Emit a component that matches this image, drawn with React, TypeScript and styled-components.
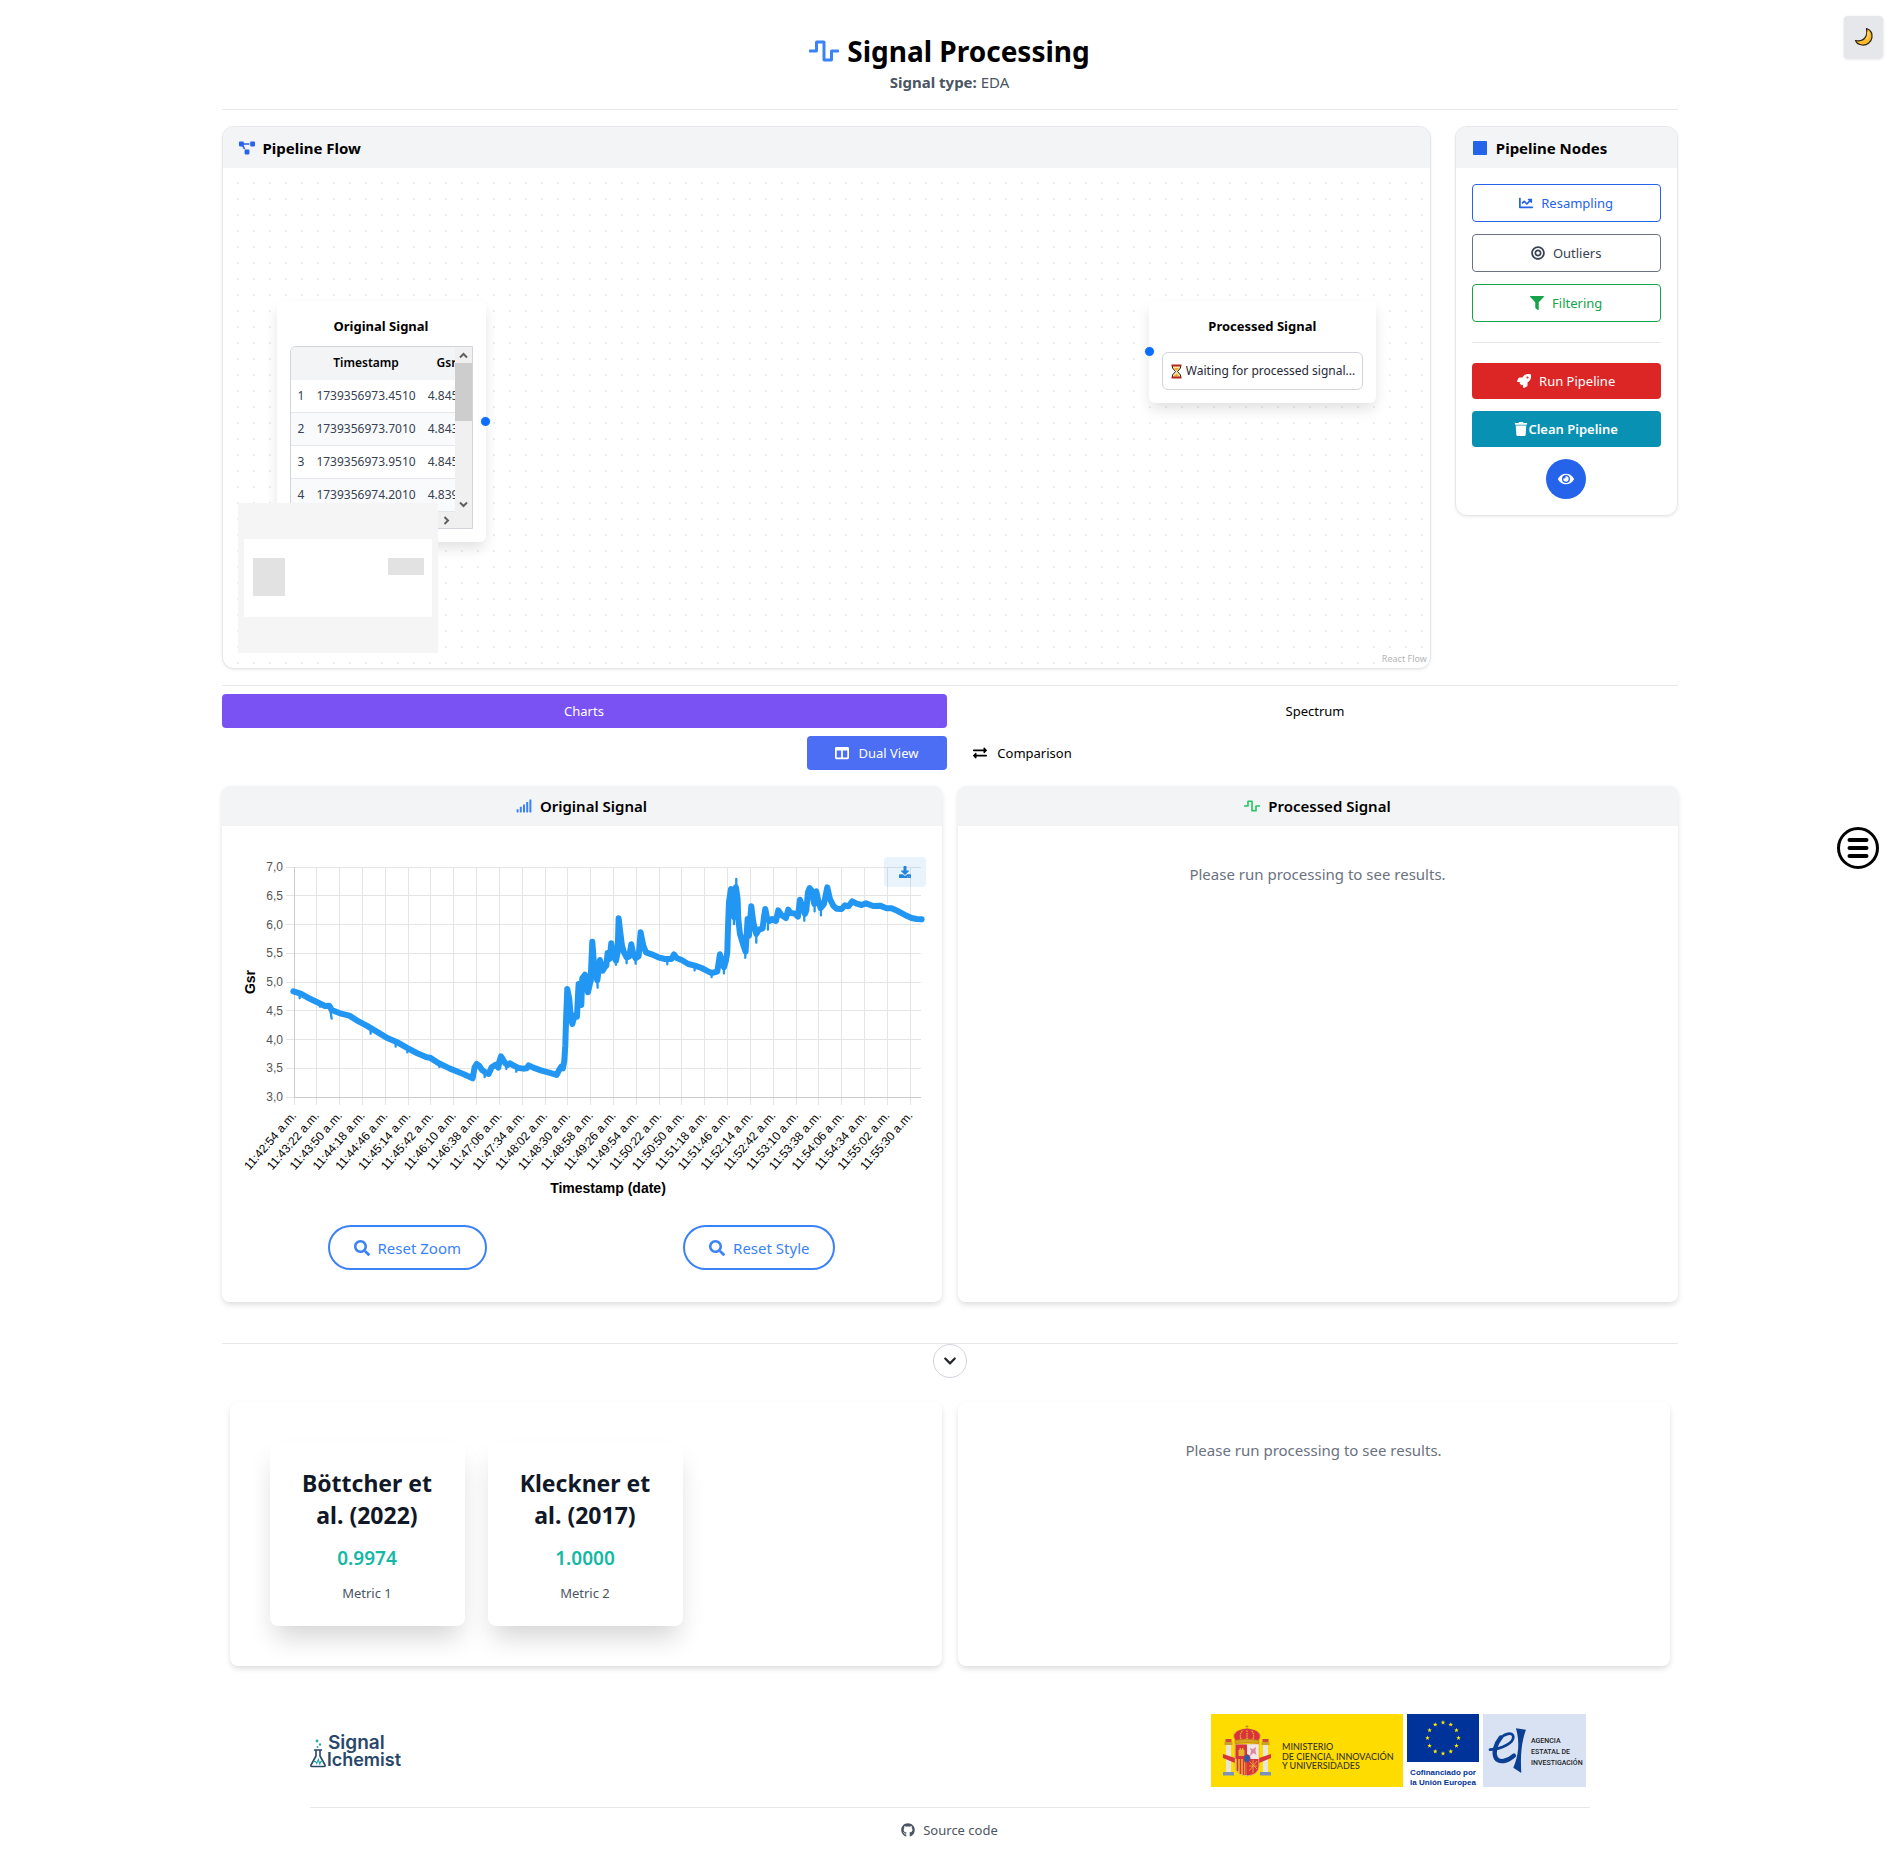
import React from "react";
import styled, { createGlobalStyle, css } from "styled-components";
import {
  FaBullseye,
  FaChartLine,
  FaChevronDown,
  FaColumns,
  FaDownload,
  FaExchangeAlt,
  FaEye,
  FaFilter,
  FaGithub,
  FaProjectDiagram,
  FaRocket,
  FaSearch,
  FaSignal,
  FaTrash,
  FaWaveSquare,
} from "react-icons/fa";

const GlobalStyle = createGlobalStyle`
  *, *::before, *::after { box-sizing: border-box; }
  body {
    margin: 0;
    background: #fff;
    color: #000;
    font-family: "Noto Sans", "Open Sans", sans-serif;
    font-size: 15px;
    line-height: 24px;
  }
  h1, h2, h3, p { margin: 0; font-size: inherit; }
  button { font: inherit; color: inherit; cursor: pointer; }
  svg { display: block; flex-shrink: 0; }
`;

const Page = styled.main`
  max-width: 1536px;
  margin: 0 auto;
  padding: 32px 40px 0;
`;

const PageHeader = styled.header`
  text-align: center;
  padding-bottom: 15px;
  border-bottom: 1px solid #e5e7eb;
`;

const PageTitle = styled.h1`
  display: flex;
  align-items: center;
  justify-content: center;
  gap: 8px;
  font-size: 28px;
  line-height: 38px;
  font-weight: 700;
  svg { color: #3b82f6; }
`;

const Subtitle = styled.p`
  color: #4b5563;
`;

const Workspace = styled.section`
  display: grid;
  grid-template-columns: repeat(12, minmax(0, 1fr));
  gap: 24px;
  align-items: start;
  padding: 16px 0;
`;

const Card = styled.section<{ $span: number }>`
  grid-column: span ${(p) => p.$span};
  border: 1px solid #e5e7eb;
  border-radius: 12px;
  overflow: hidden;
  background: #fff;
  box-shadow: 0 1px 3px rgba(0, 0, 0, 0.08);
`;

const CardHeader = styled.h2`
  display: flex;
  align-items: center;
  gap: 8px;
  padding: 9px 16px 8px;
  background: #f3f4f6;
  font-weight: 700;
  svg { color: #2563eb; }
`;

const Canvas = styled.div`
  position: relative;
  height: 500px;
  background-image: radial-gradient(circle at 50% 50%, #e8e8ec 0, #f0f0f2 1px, transparent 1px);
  background-size: 16px 16px;
  background-position: 7px 7px;
`;

const FlowNode = styled.article<{ $wide?: boolean }>`
  position: absolute;
  top: 133px;
  ${(p) => (p.$wide ? "right: 54px; width: 227px;" : "left: 54px; width: 209px;")}
  padding: 13px;
  border-radius: 6px;
  background: #fff;
  box-shadow: 0 7px 14px -1px rgba(0, 0, 0, 0.12);
`;

const NodeTitle = styled.h3`
  text-align: center;
  font-size: 13px;
  font-weight: 700;
  line-height: 24px;
`;

const Handle = styled.span<{ $side: "left" | "right" }>`
  position: absolute;
  ${(p) => p.$side}: -5px;
  top: ${(p) => (p.$side === "right" ? "115px" : "45px")};
  width: 11px;
  height: 11px;
  border-radius: 50%;
  border: 1px solid #fff;
  background: #0d6efd;
`;

const Waiting = styled.p`
  display: flex;
  align-items: center;
  gap: 4px;
  margin-top: 14px;
  padding: 7px 8px;
  border: 1px solid #d1d5db;
  border-radius: 6px;
  font-size: 12px;
  line-height: 22px;
  white-space: nowrap;
  color: #1f2937;
`;

const TableFrame = styled.div`
  display: grid;
  grid-template-columns: minmax(0, 1fr) 17px;
  grid-template-rows: 165px 16px;
  margin-top: 8px;
  border: 1px solid #d1d5db;
  border-radius: 6px 0 0 0;
  overflow: hidden;
`;

const TableClip = styled.div`
  overflow: hidden;
`;

const SampleTable = styled.table`
  border-collapse: separate;
  border-spacing: 0;
  font-size: 12px;
  line-height: 20px;
  color: #374151;
  th {
    padding: 6px 6px 7px;
    font-weight: 600;
    background: #f3f4f6;
    color: #000;
  }
  td {
    padding: 6px;
    border-bottom: 1px solid #e5e7eb;
  }
  td:first-child { padding-left: 7px; }
  tbody tr:nth-child(even) { background: #f9fafb; }
`;

const VerticalBar = styled.div`
  display: flex;
  flex-direction: column;
  align-items: center;
  justify-content: space-between;
  background: #f0f0f0;
  color: #606060;
`;

const Thumb = styled.div`
  width: 100%;
  height: 58px;
  margin-bottom: auto;
  background: #cdcdcd;
`;

const ArrowBox = styled.span`
  display: flex;
  align-items: center;
  justify-content: center;
  width: 17px;
  height: 16px;
`;

const HorizontalBar = styled.div`
  display: flex;
  justify-content: flex-end;
  background: #f0f0f0;
  color: #606060;
`;

const Corner = styled.div`
  background: #f0f0f0;
`;

const MiniMap = styled.div`
  position: absolute;
  left: 15px;
  bottom: 15px;
  width: 200px;
  height: 150px;
  background: #f5f5f5;
`;

const Attribution = styled.a`
  position: absolute;
  right: 3px;
  bottom: 2px;
  padding-left: 2px;
  background: #fff;
  font-size: 9px;
  line-height: 14px;
  color: #b5b5b5;
  text-decoration: none;
`;

const NodePanel = styled.div`
  display: flex;
  flex-direction: column;
  gap: 12px;
  padding: 16px;
`;

const NodeButton = styled.button<{ $color: string; $line?: string }>`
  display: flex;
  align-items: center;
  justify-content: center;
  gap: 8px;
  height: 38px;
  border: 1px solid ${(p) => p.$line ?? p.$color};
  border-radius: 4px;
  background: #fff;
  color: ${(p) => p.$color};
  font-size: 13px;
`;

const ActionButton = styled.button<{ $color: string; $tight?: boolean }>`
  display: flex;
  align-items: center;
  justify-content: center;
  gap: ${(p) => (p.$tight ? 0 : 8)}px;
  height: 36px;
  border: 0;
  border-radius: 4px;
  background: ${(p) => p.$color};
  color: #fff;
  font-size: 13px;
  font-weight: ${(p) => (p.$tight ? 600 : 400)};
`;

const Divider = styled.hr`
  width: 100%;
  margin: 8px 0;
  border: 0;
  border-top: 1px solid #e5e7eb;
`;

const EyeButton = styled.button`
  display: flex;
  align-items: center;
  justify-content: center;
  align-self: center;
  width: 40px;
  height: 40px;
  border: 0;
  border-radius: 50%;
  background: #2563eb;
  color: #fff;
`;

const Tabs = styled.div`
  display: grid;
  grid-template-columns: 1fr 1fr;
  gap: 6px;
  padding-top: 8px;
  border-top: 1px solid #e5e7eb;
`;

const SubTabs = styled.div`
  display: grid;
  grid-template-columns: 140px 140px;
  justify-content: center;
  gap: 6px;
  padding: 8px 0 16px;
`;

const Tab = styled.button<{ $fill?: string }>`
  display: flex;
  align-items: center;
  justify-content: center;
  gap: 10px;
  height: 34px;
  padding: 0;
  border: 0;
  border-radius: 4px;
  background: ${(p) => p.$fill ?? "transparent"};
  color: ${(p) => (p.$fill ? "#fff" : "#000")};
  font-size: 13px;
`;

const TwoColumns = styled.section<{ $inset?: boolean }>`
  display: grid;
  grid-template-columns: minmax(0, 1fr) minmax(0, 1fr);
  gap: 16px;
  ${(p) => p.$inset && css`padding: 0 8px;`}
`;

const Panel = styled.section<{ $pad?: boolean }>`
  border-radius: 8px;
  overflow: hidden;
  background: #fff;
  box-shadow: 0 3px 6px -1px rgba(0, 0, 0, 0.16);
  ${(p) => p.$pad && css`padding: 40px;`}
`;

const PanelHeader = styled.h2<{ $icon: string }>`
  display: flex;
  align-items: center;
  justify-content: center;
  gap: 8px;
  height: 40px;
  background: #f3f4f6;
  font-weight: 600;
  svg { color: ${(p) => p.$icon}; }
`;

const Notice = styled.p`
  padding-top: 36px;
  text-align: center;
  color: #6b7280;
`;

const ChartBox = styled.div`
  position: relative;
  padding: 15px 16px 0;
`;

const ChartSvg = styled.svg`
  width: 100%;
  height: auto;
  font-family: "Liberation Sans", Arial, sans-serif;
`;

const DownloadButton = styled.button`
  position: absolute;
  top: 31px;
  right: 16px;
  display: flex;
  align-items: center;
  justify-content: center;
  width: 42px;
  height: 30px;
  border: 0;
  border-radius: 4px;
  background: rgba(33, 133, 220, 0.1);
  color: #2185dc;
`;

const ResetRow = styled.div`
  display: flex;
  justify-content: space-around;
  padding: 21px 8px 32px;
`;

const PillButton = styled.button`
  display: flex;
  align-items: center;
  gap: 8px;
  height: 45px;
  padding: 0 24px;
  border: 2px solid #3b82f6;
  border-radius: 23px;
  background: #fff;
  color: #3b82f6;
`;

const Fold = styled.div`
  display: flex;
  justify-content: center;
  margin-top: 41px;
  padding-bottom: 24px;
  border-top: 1px solid #e5e7eb;
`;

const FoldButton = styled.button`
  display: flex;
  align-items: center;
  justify-content: center;
  width: 34px;
  height: 34px;
  padding: 0;
  border: 1px solid #d1d5db;
  border-radius: 50%;
  background: #fff;
  color: #212529;
`;

const Metrics = styled.div`
  display: grid;
  grid-template-columns: 195px 195px;
  gap: 23px;
`;

const MetricCard = styled.article`
  padding: 25px 24px 23px;
  border-radius: 8px;
  text-align: center;
  background: #fff;
  box-shadow: 0 16px 26px -5px rgba(0, 0, 0, 0.17);
`;

const MetricName = styled.h3`
  font-size: 23px;
  line-height: 32px;
  font-weight: 700;
  color: #111827;
`;

const MetricValue = styled.p`
  margin-top: 13px;
  font-size: 19px;
  line-height: 28px;
  font-weight: 600;
  color: #14b8a6;
`;

const MetricLabel = styled.p`
  margin-top: 11px;
  font-size: 13px;
  line-height: 20px;
  color: #4b5563;
`;

const Footer = styled.footer`
  max-width: 1280px;
  margin: 0 auto;
  padding-top: 48px;
`;

const Logos = styled.div`
  display: flex;
  align-items: center;
  justify-content: space-between;
  padding-bottom: 19px;
  padding-right: 3px;
  border-bottom: 1px solid #e5e7eb;
`;

const SourceLink = styled.a`
  display: flex;
  align-items: center;
  justify-content: center;
  gap: 8px;
  padding: 10px 0 14px;
  font-size: 13px;
  color: #4b5563;
  text-decoration: none;
`;

const ThemeButton = styled.button`
  position: fixed;
  top: 16px;
  right: 16px;
  display: flex;
  align-items: center;
  justify-content: center;
  width: 39px;
  height: 42px;
  padding: 0;
  border: 0;
  border-radius: 4px;
  background: #e5e7eb;
  box-shadow: 0 1px 3px rgba(0, 0, 0, 0.15);
`;

const MenuButton = styled.button`
  position: fixed;
  top: 827px;
  right: 20px;
  width: 42px;
  height: 42px;
  padding: 0;
  border: 0;
  background: transparent;
`;

const samples = [
  ["1739356973.4510", "4.8455"],
  ["1739356973.7010", "4.8439"],
  ["1739356973.9510", "4.8455"],
  ["1739356974.2010", "4.8393"],
];

const yTicks = ["7,0", "6,5", "6,0", "5,5", "5,0", "4,5", "4,0", "3,5", "3,0"];

const PLOT = { left: 56, right: 683, top: 26, step: 28.75, bottom: 256, tick: 22.82 };

/* One label every 28 seconds, starting at 11:42:54. */
const xTicks = Array.from({ length: 28 }, (_, i) => {
  const t = 42 * 60 + 54 + i * 28;
  const two = (n: number) => String(n).padStart(2, "0");
  return `11:${two(Math.floor(t / 60))}:${two(t % 60)} a.m.`;
});

/* Signal trace in thirds of a chart unit. */
const TRACE_A =
  "190,457 212,464 235,477 262,490 285,501 298,500 305,513 330,523 358,530 380,544 410,560 440,578 470,596 500,609 530,626 560,642 590,655 600,656 625,672 660,689 700,705 728,718 734,685 740,675 748,681 757,694 766,700 776,705 785,685 798,677 805,686 809,665 813,652 818,660 826,673 833,678 840,673 850,679 865,687 880,689 890,688 896,679 910,686 935,695 960,702 980,708 988,692 994,683 999,688 1003,665 1006,620 1008,550 1012,450 1018,480 1022,530 1027,555 1034,530 1041,533 1044,470 1046,435 1051,440 1054,498 1057,418 1065,407 1070,430 1074,460 1082,425";
const TRACE_B =
  "92,425 97,308 101,360 104,400 112,424 120,363 128,395 134,385 139,380 143,342 149,360 154,313 160,350 168,365 173,340 176,238 181,280 186,320 192,340 200,355 208,352 214,316 220,345 227,358 236,352 242,280 250,320 258,340 275,346 295,355 315,360 335,360 342,346 350,357 365,363 385,375 405,380 425,387 440,395 455,402 472,398 480,346 486,372 492,385 498,365 502,340 504,270 507,190 513,150 518,180 523,235 528,145 533,180 535,240 540,285 550,318 557,338 560,290 563,240 567,290 574,202 580,250 589,285 597,272 608,268 612,235 616,210 622,240 628,246 636,240 648,246 655,214 664,228 678,237 685,212 692,222 705,224 714,233 720,182 728,205 735,225 739,215 744,160 749,147 755,155 763,195 769,157 775,185 782,207 792,195 802,145 810,180 820,200 830,209 845,210 855,199 866,202 877,187 890,194 905,198 918,193 940,201 960,200 980,208 995,208 1015,217 1035,228 1055,237 1070,240 1085,241";

/* Thin downward and upward spikes that stick out of the thick trace. */
const SPIKES =
  "M209 464v14M270 490v13M300 505l5 34M422 570v14M497 609v14M532 626v14M628 672v12M764 700v14M829 675v15M859 685v13M1102 420l1 26M1190 355v18M1217 358v16M1312 362v14M1394 380v14M1445 400v14M1482 385v18M1519 150l0 -30M1546 338v18M1579 285v26M1614 240v32M1723 225v20M1754 195v22M1773 207v22M1512 235v20M1158 365v12";

function SignalChart() {
  return (
    <ChartSvg viewBox="0 0 688 363" role="img" aria-label="Gsr over time">
      <g stroke="#e5e5e5" strokeWidth="1" shapeRendering="crispEdges">
        {yTicks.map((t, i) => (
          <line key={t} x1={PLOT.left - 8} x2={PLOT.right} y1={PLOT.top + i * PLOT.step} y2={PLOT.top + i * PLOT.step} />
        ))}
        {xTicks.map((t, i) => (
          <line key={t} x1={PLOT.left + i * PLOT.tick} x2={PLOT.left + i * PLOT.tick} y1={PLOT.top} y2={PLOT.bottom + 8} />
        ))}
        <path d={`M${PLOT.left} ${PLOT.top}V${PLOT.bottom}H${PLOT.right}`} fill="none" stroke="#cccccc" />
      </g>
      <g fontSize="12" fill="#555" textAnchor="end">
        {yTicks.map((t, i) => (
          <text key={t} x={PLOT.left - 11} y={PLOT.top + 4 + i * PLOT.step}>{t}</text>
        ))}
      </g>
      <g fontSize="12" fill="#000" textAnchor="end">
        {xTicks.map((t, i) => {
          const x = PLOT.left + i * PLOT.tick + 3;
          return <text key={t} x={x} y={275} transform={`rotate(-49 ${x} 275)`}>{t}</text>;
        })}
      </g>
      <g fontWeight="700" fill="#000" textAnchor="middle">
        <text x={370} y={352} fontSize="14">Timestamp (date)</text>
        <text x={17} y={141} fontSize="14" transform="rotate(-90 17 141)">Gsr</text>
      </g>
      <g transform="translate(-8 -2) scale(0.3333)" fill="none" stroke="#2196f3" strokeLinejoin="round" strokeLinecap="round">
        <polyline points={TRACE_A} strokeWidth="18" />
        <polyline points={TRACE_B} strokeWidth="18" transform="translate(990 0)" />
        <path d={SPIKES} strokeWidth="7" />
      </g>
    </ChartSvg>
  );
}

function Arrow({ d }: { d: string }) {
  return (
    <ArrowBox>
      <svg width="9" height="9" viewBox="0 0 9 9" fill="none" stroke="currentColor" strokeWidth="2" aria-hidden="true">
        <path d={d} />
      </svg>
    </ArrowBox>
  );
}

function Hourglass() {
  return (
    <svg width="11" height="15" viewBox="0 0 11 15" aria-hidden="true">
      <path d="M1.5 1.5h8v2.500L6.500 7.500l3 3.500v2.500h-8V11l3-3.500-3-3.500z" fill="#ffe8a6" stroke="#222" />
      <path d="M3 4h5L5.500 7zM2.500 12.500l3-3 3 3z" fill="#f7a824" />
      <path d="M.5 1.500h10M.5 13.500h10" stroke="#b3261e" strokeWidth="2" />
    </svg>
  );
}

function Moon() {
  return (
    <svg width="20" height="20" viewBox="0 0 20 20" aria-hidden="true">
      <path d="M12.500 1.500c4 1.500 6 5 5.500 8.800-.8 5-5.200 8.200-9.800 7.700C5 17.700 2.500 16 1.500 13.500c5 1 8.800-.8 10.500-4.500 1.200-2.700 1-5.200.500-7.500z" fill="#fdb92c" stroke="#2b2113" strokeWidth="1.200" strokeLinejoin="round" />
      <path d="M14 4.500c.6 2.500.2 5.500-1.500 8" fill="none" stroke="#ffd768" strokeWidth="1.500" />
    </svg>
  );
}

function AlchemistLogo() {
  return (
    <svg width="96" height="38" viewBox="0 0 96 38" role="img" aria-label="Signal Alchemist">
      <g fill="#28476a" fontFamily="Inter, sans-serif" fontWeight="600">
        <text x="18" y="17" fontSize="19">Signal</text>
        <text x="17" y="34" fontSize="18">lchemist</text>
      </g>
      <g fill="none" stroke="#28476a" strokeWidth="1.600" strokeLinejoin="round" strokeLinecap="round">
        <path d="M4.500 18h7M6 18.500v5.500L1 33q-.6 1.500 1 1.500h12q1.600 0 1-1.500l-5-9v-5.500" />
      </g>
      <path d="M3.500 29.500h2l1.200 2 1.600-4 1.500 4.500 1-2.500h2" fill="none" stroke="#2aa9a9" strokeWidth="1.200" />
      <g fill="#2aa9a9">
        <circle cx="7" cy="9" r="1.400" />
        <circle cx="10" cy="12.500" r="1.200" />
        <circle cx="7.500" cy="15" r="0.900" />
      </g>
    </svg>
  );
}

const stars = Array.from({ length: 12 }, (_, i) => {
  const a = (i * Math.PI) / 6;
  return { x: 232 + 15.500 * Math.sin(a), y: 24 - 15.500 * Math.cos(a) };
});

function FundingLogos() {
  return (
    <svg width="376" height="74" viewBox="0 0 376 74" role="img" aria-label="Ministerio de Ciencia, Innovación y Universidades, Unión Europea, Agencia Estatal de Investigación">
      <rect width="192" height="73" fill="#ffdc00" />
      <g>
        <path d="M15 31h5v27h-5zM52 31h5v27h-5z" fill="#e9e5da" />
        <path d="M13.500 28h8v3h-8zM50.500 28h8v3h-8z" fill="#c9a227" />
        <path d="M14.500 25h6v3h-6zM51.500 25h6v3h-6z" fill="#d2473b" />
        <path d="M12 58h11v3.500H12zM49 58h11v3.500H49z" fill="#7c93b8" />
        <path d="M12 40l12 4v5l-12-5zM60 40l-12 4v5l12-5z" fill="#d9343c" />
        <path d="M24 30h24v22q0 9-12 10-12-1-12-10z" fill="#e8e0d2" stroke="#c9a227" strokeWidth=".6" />
        <path d="M24.500 30.500H36V45H24.500z" fill="#d9343c" />
        <path d="M27.500 42v-6h1v-2h1.500v1.500h1V34h1.500v2h1v6z" fill="#e5b52b" />
        <path d="M36 30.500h11.500V45H36z" fill="#f4e6e6" />
        <path d="M39 42l1-5-1-3 3 1 3-2-.5 4 1 4-3-2z" fill="#d98aa0" />
        <path d="M24.500 45H36v16.500q-11.500-1-11.500-9.500z" fill="#e9b92d" />
        <path d="M26.500 45v12M29.500 45v15M32.500 45v16M35 45v16" stroke="#d9343c" strokeWidth="1.500" />
        <path d="M36 45h11.500v7q0 8.500-11.500 9.500z" fill="#d9343c" />
        <path d="M38 47l8 8M46 47l-8 10M38 52h8M42 46v13" stroke="#e9b92d" strokeWidth=".8" />
        <ellipse cx="36" cy="44.500" rx="3.200" ry="4" fill="#2b5ca8" stroke="#d9343c" strokeWidth=".7" />
        <path d="M25 28q-3-4-2-8 4-5 13-5.500Q45 15 49 20q1 4-2 8z" fill="#d9343c" />
        <path d="M24 29.500v-3q12-3 24 0v3q-12-2-24 0zM36 11v4M34.500 12.500h3" fill="#d9a520" stroke="#b9871a" strokeWidth=".8" />
        <path d="M24 26q-3-5 1-8M30 25q-2-5 2-9M36 25v-9M42 25q2-5-2-9M48 26q3-5-1-8" fill="none" stroke="#e5b52b" strokeWidth="1.300" strokeDasharray="1.500 .8" />
      </g>
      <g fontFamily="Lato, sans-serif" fontSize="9" fontWeight="500" fill="#3a3520">
        <text x="71" y="36">MINISTERIO</text>
        <text x="71" y="46">DE CIENCIA, INNOVACIÓN</text>
        <text x="71" y="55">Y UNIVERSIDADES</text>
      </g>
      <rect x="196" width="72" height="48" fill="#003399" />
      {stars.map((s, i) => (
        <path
          key={i}
          transform={`translate(${s.x} ${s.y})`}
          d="M0-2.400.6-.8 2.300-.7 1 .3 1.400 2 0 1-1.400 2-1 .3-2.300-.7-.6-.8z"
          fill="#ffe600"
        />
      ))}
      <g fontFamily="Liberation Sans, Arial, sans-serif" fontSize="8" fontWeight="700" fill="#003399" textAnchor="middle">
        <text x="232" y="61">Cofinanciado por</text>
        <text x="232" y="71">la Unión Europea</text>
      </g>
      <rect x="272" width="103" height="73" fill="#d9e2f3" />
      <g transform="translate(-11 -15) scale(0.3333)" fill="none" stroke="#0a3f94" strokeLinecap="round">
        <path d="M870 152C905 150 942 132 940 113C938 97 912 104 900 120" strokeWidth="8" />
        <path d="M902 116C884 138 880 162 888 178C898 192 922 188 942 170" strokeWidth="13" />
        <path d="M948 88L978 92C964 130 961 170 964 222L940 206C956 170 960 130 948 88z" fill="#0a3f94" stroke="none" />
      </g>
      <g fontFamily="Roboto, sans-serif" fontSize="7" fontWeight="500" fill="#222">
        <text x="320" y="29">AGENCIA</text>
        <text x="320" y="40">ESTATAL DE</text>
        <text x="320" y="51">INVESTIGACIÓN</text>
      </g>
    </svg>
  );
}

export default function App() {
  return (
    <>
      <GlobalStyle />
      <ThemeButton aria-label="Switch theme"><Moon /></ThemeButton>
      <MenuButton aria-label="Menu">
        <svg width="42" height="42" viewBox="0 0 42 42" fill="none" stroke="#000" strokeWidth="3" strokeLinecap="round">
          <circle cx="21" cy="21" r="19.500" />
          <path d="M12.500 13h17M12.500 21h17M12.500 29h17" strokeWidth="4" />
        </svg>
      </MenuButton>
      <Page>
        <PageHeader>
          <PageTitle><FaWaveSquare size={30} />Signal Processing</PageTitle>
          <Subtitle><strong>Signal type:</strong> EDA</Subtitle>
        </PageHeader>

        <Workspace>
          <Card $span={10}>
            <CardHeader><FaProjectDiagram size={16} />Pipeline Flow</CardHeader>
            <Canvas>
              <FlowNode>
                <NodeTitle>Original Signal</NodeTitle>
                <TableFrame>
                  <TableClip>
                    <SampleTable>
                      <thead>
                        <tr><th aria-label="Row" /><th>Timestamp</th><th>Gsr</th></tr>
                      </thead>
                      <tbody>
                        {samples.map(([time, gsr], i) => (
                          <tr key={time}><td>{i + 1}</td><td>{time}</td><td>{gsr}</td></tr>
                        ))}
                      </tbody>
                    </SampleTable>
                  </TableClip>
                  <VerticalBar>
                    <Arrow d="M1 6.500 4.500 3 8 6.500" />
                    <Thumb />
                    <Arrow d="M1 2.500 4.500 6 8 2.500" />
                  </VerticalBar>
                  <HorizontalBar><Arrow d="M2.500 1 6 4.500 2.500 8" /></HorizontalBar>
                  <Corner />
                </TableFrame>
                <Handle $side="right" />
              </FlowNode>
              <FlowNode $wide>
                <NodeTitle>Processed Signal</NodeTitle>
                <Waiting><Hourglass />Waiting for processed signal...</Waiting>
                <Handle $side="left" />
              </FlowNode>
              <MiniMap>
                <svg width="200" height="150" viewBox="0 0 200 150" role="img" aria-label="Mini map">
                  <rect x="6" y="36" width="188" height="78" fill="#fff" />
                  <rect x="15" y="55" width="32" height="38" fill="#e2e2e2" />
                  <rect x="150" y="55" width="36" height="17" fill="#e2e2e2" />
                </svg>
              </MiniMap>
              <Attribution href="#">React Flow</Attribution>
            </Canvas>
          </Card>

          <Card $span={2}>
            <CardHeader>
              <svg width="16" height="14" viewBox="0 0 16 14" aria-hidden="true"><rect x="1" width="14" height="14" rx="1" fill="currentColor" /></svg>
              Pipeline Nodes
            </CardHeader>
            <NodePanel>
              <NodeButton $color="#2563eb"><FaChartLine size={14} />Resampling</NodeButton>
              <NodeButton $color="#374151" $line="#6b7280"><FaBullseye size={14} />Outliers</NodeButton>
              <NodeButton $color="#16a34a"><FaFilter size={14} />Filtering</NodeButton>
              <Divider />
              <ActionButton $color="#dc2626"><FaRocket size={14} />Run Pipeline</ActionButton>
              <ActionButton $color="#0891b2" $tight><FaTrash size={14} />Clean Pipeline</ActionButton>
              <EyeButton aria-label="Show"><FaEye size={16} /></EyeButton>
            </NodePanel>
          </Card>
        </Workspace>

        <Tabs>
          <Tab $fill="#7a52f4">Charts</Tab>
          <Tab>Spectrum</Tab>
        </Tabs>
        <SubTabs>
          <Tab $fill="#4c6ef5"><FaColumns size={14} />Dual View</Tab>
          <Tab><FaExchangeAlt size={14} />Comparison</Tab>
        </SubTabs>

        <TwoColumns>
          <Panel>
            <PanelHeader $icon="#3b82f6"><FaSignal size={16} />Original Signal</PanelHeader>
            <ChartBox>
              <SignalChart />
              <DownloadButton aria-label="Download"><FaDownload size={12} /></DownloadButton>
            </ChartBox>
            <ResetRow>
              <PillButton><FaSearch size={16} />Reset Zoom</PillButton>
              <PillButton><FaSearch size={16} />Reset Style</PillButton>
            </ResetRow>
          </Panel>
          <Panel>
            <PanelHeader $icon="#22c55e"><FaWaveSquare size={16} />Processed Signal</PanelHeader>
            <Notice>Please run processing to see results.</Notice>
          </Panel>
        </TwoColumns>

        <Fold>
          <FoldButton aria-label="Collapse"><FaChevronDown size={14} /></FoldButton>
        </Fold>

        <TwoColumns $inset>
          <Panel $pad>
            <Metrics>
              <MetricCard>
                <MetricName>Böttcher et al. (2022)</MetricName>
                <MetricValue>0.9974</MetricValue>
                <MetricLabel>Metric 1</MetricLabel>
              </MetricCard>
              <MetricCard>
                <MetricName>Kleckner et al. (2017)</MetricName>
                <MetricValue>1.0000</MetricValue>
                <MetricLabel>Metric 2</MetricLabel>
              </MetricCard>
            </Metrics>
          </Panel>
          <Panel>
            <Notice>Please run processing to see results.</Notice>
          </Panel>
        </TwoColumns>

        <Footer>
          <Logos>
            <AlchemistLogo />
            <FundingLogos />
          </Logos>
          <SourceLink href="#"><FaGithub size={14} />Source code</SourceLink>
        </Footer>
      </Page>
    </>
  );
}
